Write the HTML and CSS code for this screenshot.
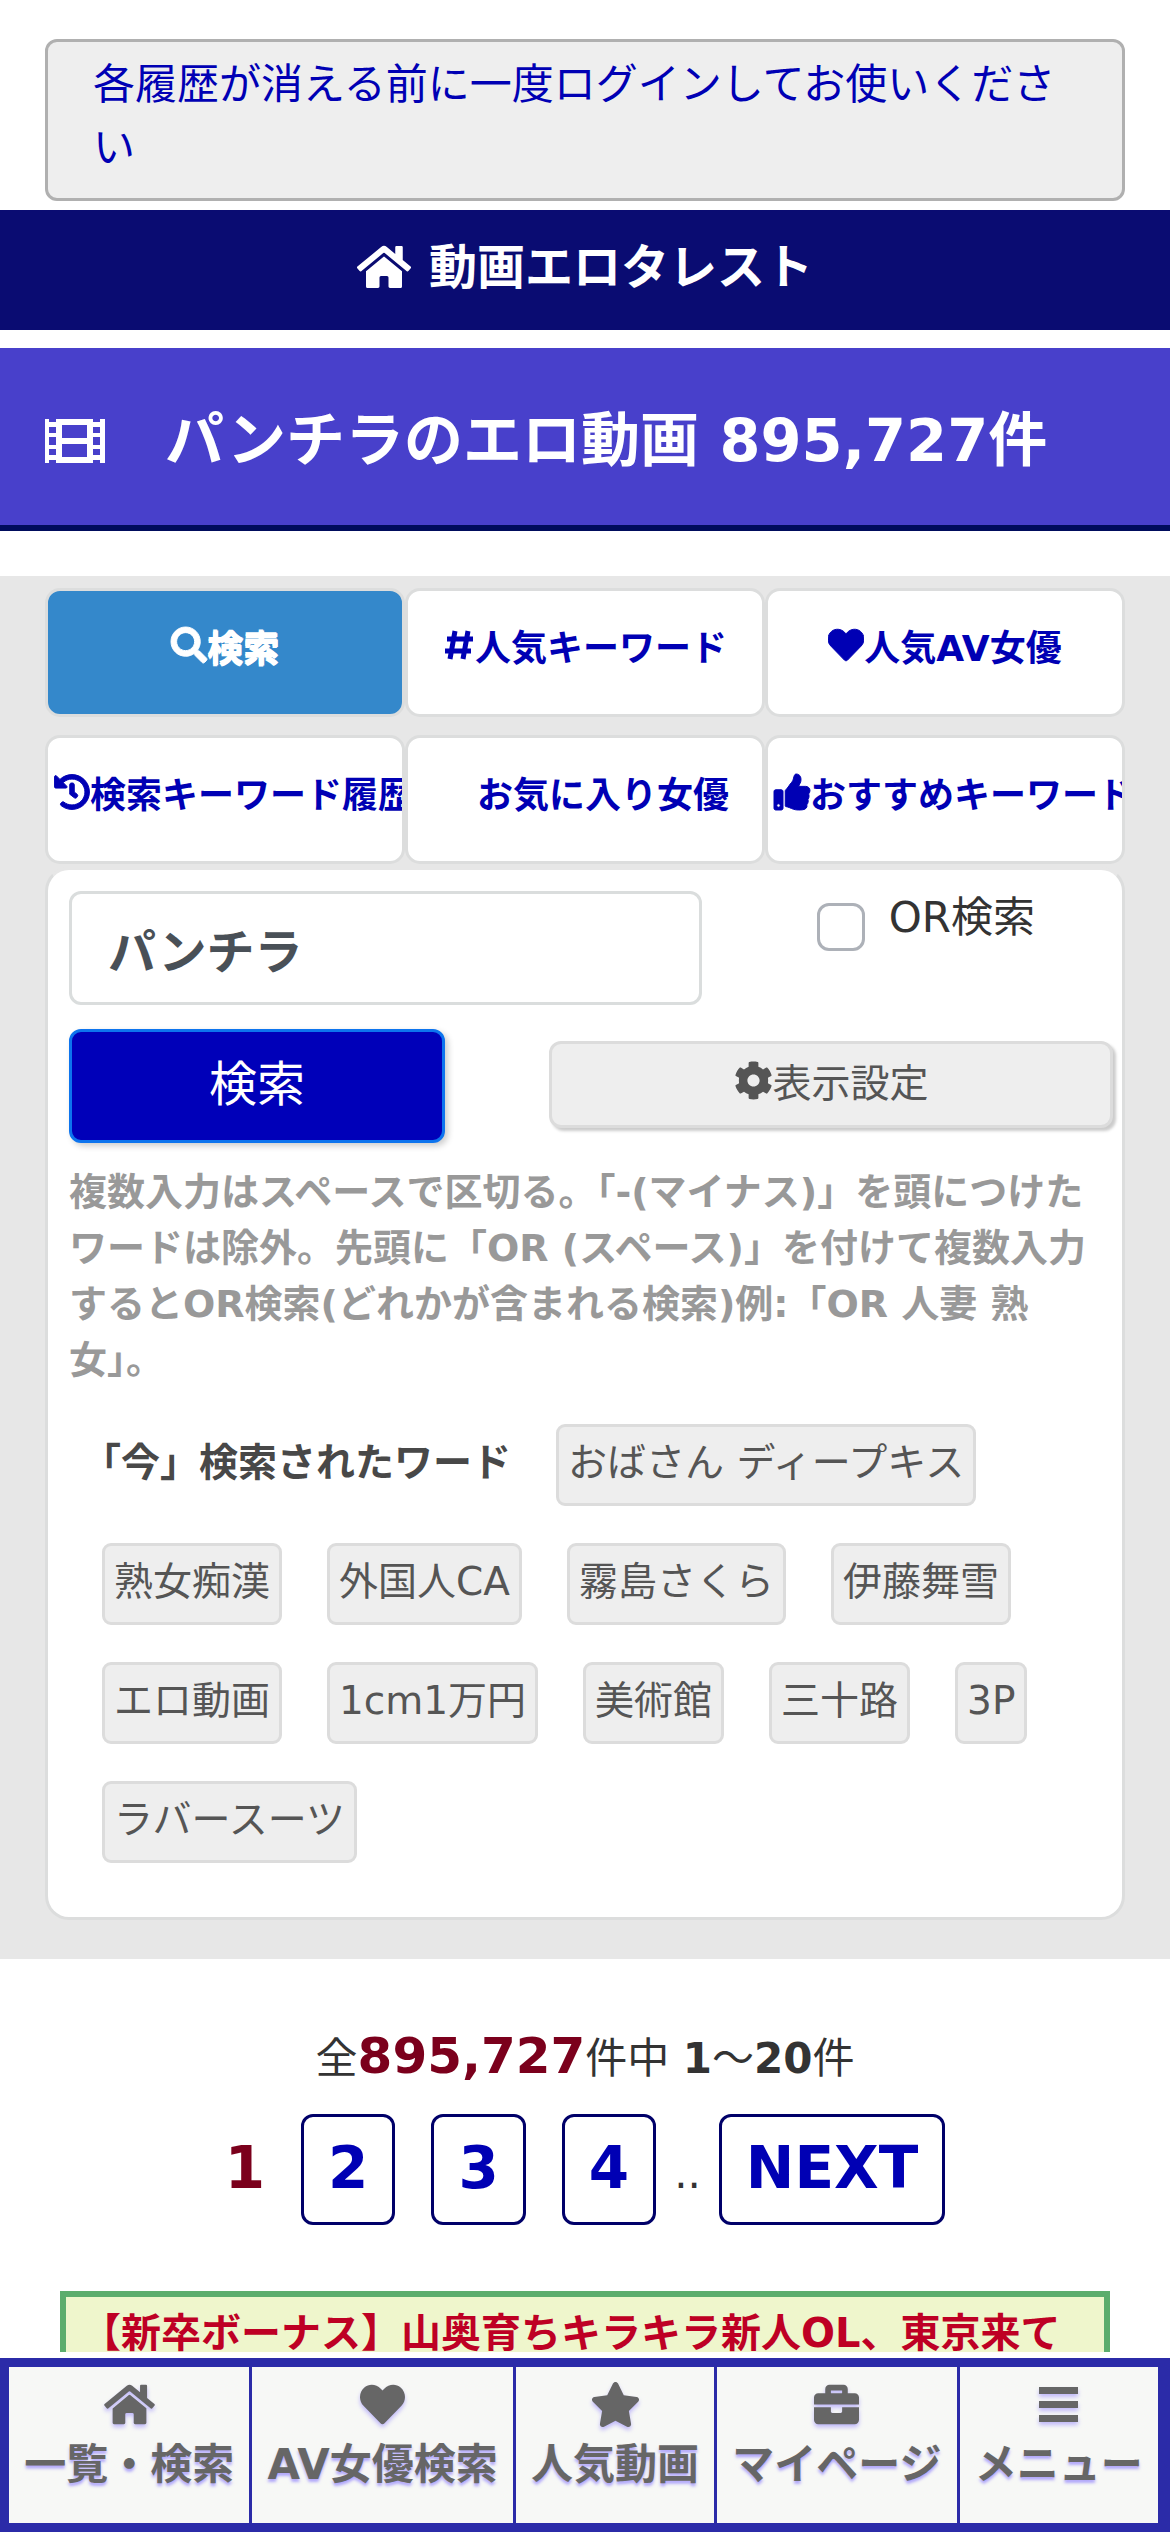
FILE: index.html
```html
<!DOCTYPE html>
<html lang="ja">

<head>
    <meta charset="UTF-8">
    <meta name="viewport" content="width=device-width, initial-scale=1.0">
    <title>動画エロタレスト</title>
    <link rel="stylesheet" href="styles.css">
</head>

<body>
    <!-- shared icons -->
    <svg class="sprite" aria-hidden="true">
        <symbol id="i-home" viewBox="0 0 576 512"><path d="M280.37 148.26L96 300.11V464a16 16 0 0 0 16 16l112.06-.29a16 16 0 0 0 15.92-16V368a16 16 0 0 1 16-16h64a16 16 0 0 1 16 16v95.64a16 16 0 0 0 16 16.05L464 480a16 16 0 0 0 16-16V300L295.67 148.26a12.19 12.19 0 0 0-15.3 0zM571.6 251.47L488 182.56V44.05a12 12 0 0 0-12-12h-56a12 12 0 0 0-12 12v72.61L318.47 43a48 48 0 0 0-61 0L4.34 251.47a12 12 0 0 0-1.6 16.9l25.5 31A12 12 0 0 0 45.15 301l235.22-193.74a12.19 12.19 0 0 1 15.3 0L530.9 301a12 12 0 0 0 16.9-1.6l25.5-31a12 12 0 0 0-1.7-16.93z"/></symbol>
        <symbol id="i-heart" viewBox="0 0 512 512"><path d="M462.3 62.6C407.5 15.9 326 24.3 275.7 76.2L256 96.5l-19.7-20.3C186.1 24.3 104.5 15.9 49.7 62.6c-62.8 53.6-66.1 149.8-9.9 207.9l193.5 199.8c12.5 12.9 32.8 12.9 45.3 0l193.5-199.8c56.3-58.1 53-154.3-9.8-207.9z"/></symbol>
    </svg>

    <div class="notice">
        <a href="#login">各履歴が消える前に一度ログインしてお使いください</a>
    </div>

    <header class="site-header">
        <a href="#top">
            <svg class="icon-home" aria-hidden="true"><use href="#i-home"/></svg>
            <span>動画エロタレスト</span>
        </a>
    </header>

    <h1>
        <svg class="icon-film" viewBox="0 0 60 44" aria-hidden="true">
            <path fill-rule="evenodd" d="M0 0h4v3h7V0h37v3h7V0h5v44h-5v-3h-7v3H11v-3H4v3H0zM4 8v6h7V8zM4 18v8h7v-8zM4 30v6h7v-6zM48 8v6h7V8zM48 18v8h7v-8zM48 30v6h7v-6zM17 6v13h25V6zM17 25v13h25V25z"/>
        </svg>
        <span>パンチラのエロ動画 895,727件</span>
    </h1>

    <main>
        <section class="search-area">
            <div class="tabs">
                <button type="button" class="tab active"><svg class="tab-icon" viewBox="0 0 512 512" aria-hidden="true"><path d="M505 442.7L405.3 343c-4.5-4.5-10.6-7-17-7H372c27.6-35.3 44-79.7 44-128C416 93.1 322.9 0 208 0S0 93.1 0 208s93.1 208 208 208c48.3 0 92.7-16.4 128-44v16.3c0 6.4 2.5 12.5 7 17l99.7 99.7c9.4 9.4 24.6 9.4 33.9 0l28.3-28.3c9.4-9.4 9.4-24.6.1-34zM208 336c-70.7 0-128-57.2-128-128 0-70.7 57.2-128 128-128 70.7 0 128 57.2 128 128 0 70.7-57.2 128-128 128z"/></svg><span>検索</span></button>
                <button type="button" class="tab"><svg class="tab-icon hash" viewBox="0 0 32 36" aria-hidden="true"><path d="M12 4L7 32M25 4L20 32M4 12H30M2 24H28"/></svg><span>人気キーワード</span></button>
                <button type="button" class="tab"><svg class="tab-icon" aria-hidden="true"><use href="#i-heart"/></svg><span>人気AV女優</span></button>
                <button type="button" class="tab"><svg class="tab-icon" viewBox="0 0 512 512" aria-hidden="true"><path d="M504 255.531c.253 136.64-111.18 248.372-247.82 248.468-59.015.042-113.223-20.53-155.822-54.911-11.077-8.94-11.905-25.541-1.839-35.607l11.267-11.267c8.609-8.609 22.353-9.551 31.891-1.984C173.062 425.135 212.781 440 256 440c101.705 0 184-82.311 184-184 0-101.705-82.311-184-184-184-48.814 0-93.149 18.969-126.068 49.932l50.754 50.754c10.08 10.08 2.941 27.314-11.313 27.314H24c-8.837 0-16-7.163-16-16V38.627c0-14.254 17.234-21.393 27.314-11.314l49.372 49.372C129.209 34.136 189.552 8 256 8c136.81 0 247.747 110.78 248 247.531zm-180.912 78.784l9.823-12.63c8.138-10.463 6.253-25.542-4.21-33.679L288 256.349V152c0-13.255-10.745-24-24-24h-16c-13.255 0-24 10.745-24 24v135.651l65.409 50.874c10.463 8.137 25.541 6.253 33.679-4.21z"/></svg><span>検索キーワード履歴</span></button>
                <button type="button" class="tab"><span class="tab-icon"></span><span>お気に入り女優</span></button>
                <button type="button" class="tab"><svg class="tab-icon" viewBox="0 0 512 512" aria-hidden="true"><path d="M104 224H24c-13.255 0-24 10.745-24 24v240c0 13.255 10.745 24 24 24h80c13.255 0 24-10.745 24-24V248c0-13.255-10.745-24-24-24zM64 472c-13.255 0-24-10.745-24-24s10.745-24 24-24 24 10.745 24 24-10.745 24-24 24zM384 81.452c0 42.416-25.97 66.208-33.277 94.548h101.723c33.397 0 59.397 27.746 59.553 58.098.084 17.938-7.546 37.249-19.439 49.197l-.11.11c9.836 23.337 8.237 56.037-9.308 79.469 8.681 25.895-.069 57.704-16.382 74.757 4.298 17.598 2.244 32.575-6.148 44.632C440.202 511.587 389.616 512 346.839 512l-2.845-.001c-48.287-.017-87.806-17.598-119.56-31.725-15.957-7.099-36.821-15.887-52.651-16.178-6.54-.12-11.783-5.457-11.783-11.998v-213.77c0-3.2 1.282-6.271 3.558-8.521 39.614-39.144 56.648-80.587 89.117-113.111 14.804-14.832 20.188-37.236 25.393-58.902C282.515 39.293 291.817 0 312 0c24 0 72 8 72 81.452z"/></svg><span>おすすめキーワード</span></button>
            </div>

            <div class="panel">
                <form>
                    <div class="form-row">
                        <input type="text" class="keyword" name="q" value="パンチラ" aria-label="キーワード">
                        <div class="or-check">
                            <input type="checkbox" id="or" name="or">
                            <label for="or">OR検索</label>
                        </div>
                    </div>
                    <div class="form-row buttons">
                        <button type="submit" class="btn-search">検索</button>
                        <button type="button" class="btn-config"><svg class="icon-cog" viewBox="0 0 512 512" aria-hidden="true"><path d="M487.4 315.7l-42.6-24.6c4.3-23.2 4.3-47 0-70.2l42.6-24.6c4.9-2.8 7.1-8.6 5.5-14-11.1-35.6-30-67.8-54.7-94.6-3.8-4.1-10-5.1-14.8-2.3L380.8 110c-17.9-15.4-38.5-27.3-60.8-35.1V25.8c0-5.6-3.9-10.5-9.4-11.7-36.7-8.2-74.3-7.8-109.2 0-5.5 1.2-9.4 6.1-9.4 11.7V75c-22.2 7.9-42.8 19.8-60.8 35.1L88.7 85.5c-4.9-2.8-11-1.9-14.8 2.3-24.7 26.7-43.6 58.9-54.7 94.6-1.7 5.4.6 11.2 5.5 14L67.3 221c-4.3 23.2-4.3 47 0 70.2l-42.6 24.6c-4.9 2.8-7.1 8.6-5.5 14 11.1 35.6 30 67.8 54.7 94.6 3.8 4.1 10 5.1 14.8 2.3l42.6-24.6c17.9 15.4 38.5 27.3 60.8 35.1v49.2c0 5.6 3.9 10.5 9.4 11.7 36.7 8.2 74.3 7.8 109.2 0 5.5-1.2 9.4-6.1 9.4-11.7v-49.2c22.2-7.9 42.8-19.8 60.8-35.1l42.6 24.6c4.9 2.8 11 1.9 14.8-2.3 24.7-26.7 43.6-58.9 54.7-94.6 1.5-5.5-.7-11.3-5.6-14.1zM256 336c-44.1 0-80-35.9-80-80s35.9-80 80-80 80 35.9 80 80-35.9 80-80 80z"/></svg><span>表示設定</span></button>
                    </div>
                </form>

                <p class="help">複数入力はスペースで区切る。「-(マイナス)」を頭につけたワードは除外。先頭に「OR (スペース)」を付けて複数入力するとOR検索(どれかが含まれる検索)例:「OR 人妻 熟女」。</p>

                <div class="words">
                    <b>「今」検索されたワード</b>
                    <a href="#w1">おばさん ディープキス</a>
                    <a href="#w2">熟女痴漢</a>
                    <a href="#w3">外国人CA</a>
                    <a href="#w4">霧島さくら</a>
                    <a href="#w5">伊藤舞雪</a>
                    <a href="#w6">エロ動画</a>
                    <a href="#w7">1cm1万円</a>
                    <a href="#w8">美術館</a>
                    <a href="#w9">三十路</a>
                    <a href="#w10">3P</a>
                    <a href="#w11">ラバースーツ</a>
                </div>
            </div>
        </section>

        <p class="count">全<b class="total">895,727</b>件中 <b>1</b>～<b>20</b>件</p>

        <div class="pager">
            <b class="current">1</b>
            <a href="#p2">2</a>
            <a href="#p3">3</a>
            <a href="#p4">4</a>
            <span>..</span>
            <a href="#next">NEXT</a>
        </div>

        <a class="ad" href="#ad">【新卒ボーナス】山奥育ちキラキラ新人OL、東京来て</a>
    </main>

    <nav class="bottom-nav">
        <ul>
            <li><a href="#list"><svg class="nav-icon wide" aria-hidden="true"><use href="#i-home"/></svg>一覧・検索</a></li>
            <li><a href="#actress"><svg class="nav-icon" aria-hidden="true"><use href="#i-heart"/></svg>AV女優検索</a></li>
            <li><a href="#popular"><svg class="nav-icon wide" viewBox="0 0 576 512" aria-hidden="true"><path d="M259.3 17.8L194 150.2 47.9 171.5c-26.2 3.8-36.7 36.1-17.7 54.6l105.7 103-25 145.5c-4.5 26.3 23.2 46 46.4 33.7L288 439.6l130.7 68.7c23.2 12.2 50.9-7.4 46.4-33.7l-25-145.5 105.7-103c19-18.5 8.5-50.8-17.7-54.6L382 150.2 316.7 17.8c-11.7-23.6-45.6-23.9-57.4 0z"/></svg>人気動画</a></li>
            <li><a href="#mypage"><svg class="nav-icon" viewBox="0 0 512 512" aria-hidden="true"><path d="M320 336c0 8.84-7.16 16-16 16h-96c-8.84 0-16-7.16-16-16v-48H0v144c0 25.6 22.4 48 48 48h416c25.6 0 48-22.4 48-48V288H320v48zm144-208h-80V80c0-25.6-22.4-48-48-48H176c-25.6 0-48 22.4-48 48v48H48c-25.6 0-48 22.4-48 48v80h512v-80c0-25.6-22.4-48-48-48zm-144 0H192V96h128v32z"/></svg>マイページ</a></li>
            <li><a href="#menu"><svg class="nav-icon" viewBox="0 0 45 45" aria-hidden="true"><path d="M3 5h39v7H3zM3 19h39v7H3zM3 33h39v7H3z"/></svg>メニュー</a></li>
        </ul>
    </nav>
</body>

</html>
```

FILE: styles.css
```css
* {
    box-sizing: border-box;
}

body {
    margin: 0;
    font-family: "DejaVu Sans", "Noto Sans CJK JP", sans-serif;
    font-size: 42px;
    color: #333;
    background: #fff;
}

a {
    color: #0000b4;
    text-decoration: none;
}

button,
input {
    font-family: inherit;
    margin: 0;
}

svg {
    fill: currentColor;
    flex: none;
}

.sprite {
    position: absolute;
    width: 0;
    height: 0;
}

.notice {
    margin: 39px 45px 9px;
    padding: 11px 45px 19px;
    line-height: 63px;
    background: #eee;
    border: 3px solid #b0b0b0;
    border-radius: 12px;
}

.site-header {
    background: #0a0c72;
    padding: 21px 0 27px;
    text-align: center;
}

.site-header a {
    display: flex;
    justify-content: center;
    align-items: center;
    gap: 18px;
    color: #fff;
    font-size: 48px;
    font-weight: bold;
    line-height: 72px;
}

.icon-home {
    width: 54px;
    height: 48px;
}

h1 {
    display: flex;
    align-items: center;
    gap: 60px;
    margin: 18px 0 45px;
    padding: 48px 45px 39px;
    font-size: 59px;
    line-height: 90px;
    color: #fff;
    background: #4840cb;
    border-bottom: 6px solid #000c5c;
}

.icon-film {
    width: 60px;
    height: 44px;
}

.search-area {
    background: #e7e7e7;
    padding: 12px 45px 39px;
}

.tabs {
    display: grid;
    grid-template-columns: repeat(3, minmax(0, 1fr));
    row-gap: 18px;
}

.tab {
    display: flex;
    justify-content: safe center;
    align-items: center;
    height: 129px;
    padding: 0 6px 15px;
    overflow: hidden;
    white-space: nowrap;
    font-size: 36px;
    font-weight: bold;
    color: #0000b4;
    background: #fff;
    border: 3px solid #dcdddd;
    border-radius: 15px;
}

.tab.active {
    color: #fff;
    background: #3488cb;
    text-shadow: 1px 1px 0 #fff, 0 2px 0 #fff;
}

.tab-icon {
    width: 36px;
    height: 36px;
    flex: none;
    overflow: visible;
    stroke: currentColor;
    stroke-width: 14;
}

.tab-icon.hash {
    width: 32px;
    fill: none;
    stroke-width: 5;
}

.panel {
    margin-top: 3px;
    padding: 21px 21px 54px;
    background: #fff;
    border: 3px solid #dcdddd;
    border-top-color: #e7e7e7;
    border-radius: 24px;
}

.form-row {
    display: flex;
    justify-content: space-between;
}

.keyword {
    width: calc(100% - 399px);
    height: 114px;
    padding: 0 36px;
    font-size: 48px;
    font-weight: bold;
    color: #495057;
    background: #fff;
    border: 3px solid #dadddd;
    border-radius: 12px;
}

.or-check {
    display: flex;
    gap: 24px;
    margin-right: 66px;
    line-height: 54px;
}

.or-check input {
    appearance: none;
    width: 48px;
    height: 48px;
    margin-top: 12px;
    background: #fff;
    border: 3px solid #adb1b8;
    border-radius: 12px;
}

.buttons {
    align-items: center;
    margin: 24px -12px 0 0;
}

.btn-search,
.btn-config {
    border: 3px solid #dcdcdc;
    border-radius: 12px;
    cursor: pointer;
}

.btn-search {
    width: 36%;
    height: 114px;
    padding: 0 0 12px;
    font-size: 48px;
    color: #fff;
    background: #0000b9;
    border-color: #0d74ee;
    box-shadow: 3px 3px 6px rgba(0, 0, 0, 0.2);
}

.btn-config {
    display: flex;
    justify-content: center;
    align-items: center;
    width: 54%;
    height: 87px;
    margin-bottom: 3px;
    padding: 0 0 9px;
    font-size: 39px;
    color: #555;
    background: #eee;
    box-shadow: 3px 3px 3px #ccc;
}

.icon-cog {
    width: 39px;
    height: 39px;
}

.help {
    margin: 21px 0 36px;
    font-size: 38px;
    font-weight: bold;
    line-height: 56px;
    color: #999;
}

.words {
    display: flex;
    flex-wrap: wrap;
    gap: 37px 45px;
    padding-left: 33px;
    font-size: 39px;
    line-height: 60px;
    color: #484848;
}

.words b {
    margin-left: -20px;
    padding-top: 9px;
}

.words a {
    padding: 6px 9px 10px;
    color: #555;
    background: #eee;
    border: 3px solid #dcdcdc;
    border-radius: 9px;
}

.count {
    margin: 60px 0 18px;
    text-align: center;
    line-height: 75px;
}

.total {
    font-size: 50px;
    color: #7b001c;
}

.pager {
    display: flex;
    justify-content: center;
    align-items: baseline;
    gap: 18px;
}

.pager a,
.current {
    font-size: 58px;
    font-weight: bold;
    line-height: 66px;
}

.pager a {
    padding: 18px 24px 21px;
    border: 3px solid #000069;
    border-radius: 12px;
}

.current {
    color: #7b001c;
}

.current + a,
.pager a + a {
    margin-left: 18px;
}

.ad {
    display: block;
    margin: 66px 60px 0;
    padding: 6px 15px 60px;
    font-size: 40px;
    font-weight: bold;
    line-height: 60px;
    color: #be0024;
    background: #eff6cc;
    border: 6px solid #5cad6d;
    border-bottom: 0;
}

.bottom-nav {
    position: fixed;
    left: 0;
    right: 0;
    bottom: 0;
    padding-top: 6px;
    background: #fff;
}

.bottom-nav ul {
    display: flex;
    margin: 0;
    padding: 0;
    list-style: none;
    background: #f7f8f6;
    border: 9px solid #2b2ba8;
}

.bottom-nav li {
    flex: 1 0 auto;
    border-right: 3px solid #2b2ba8;
}

.bottom-nav a {
    display: flex;
    flex-direction: column;
    align-items: center;
    height: 156px;
    padding: 15px 15px 0;
    font-weight: bold;
    line-height: 75px;
    white-space: nowrap;
    color: #666;
    text-shadow: 0 3px 3px rgba(110, 90, 255, 0.5);
}

.nav-icon {
    width: 45px;
    height: 45px;
    filter: drop-shadow(0 3px 2px rgba(110, 90, 255, 0.4));
}

.nav-icon.wide {
    width: 51px;
}
```
